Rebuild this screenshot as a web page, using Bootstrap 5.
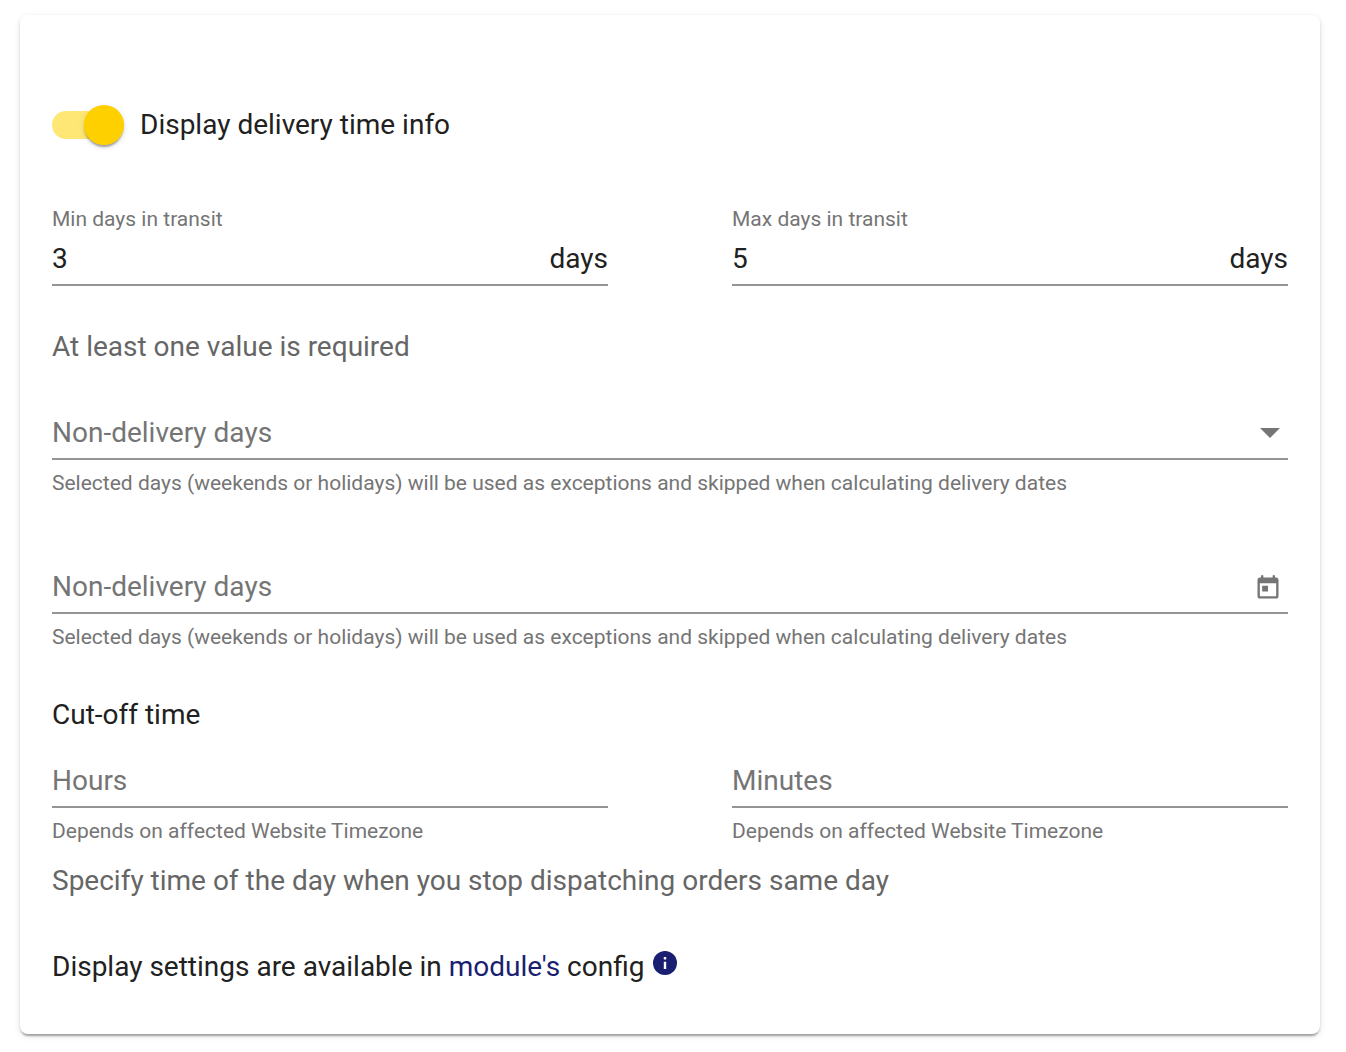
<!DOCTYPE html>
<html lang="en">
<head>
<meta charset="utf-8">
<meta name="viewport" content="width=device-width, initial-scale=1">
<title>Delivery time settings</title>
<link href="https://cdn.jsdelivr.net/npm/bootstrap@5.3.0/dist/css/bootstrap.min.css" rel="stylesheet">
<style>
  body { font-family: Roboto, "Liberation Sans", sans-serif; font-size: 28px; line-height: 40px; color: #212121; background: #fff; }
  .page-wrap { padding: 15px 26px 18px 20px; }
  .settings-card { padding: 89px 32px 47px; border-radius: 8px;
    box-shadow: 0 4px 2px -2px rgba(0,0,0,.2), 0 2px 2px 0 rgba(0,0,0,.14), 0 2px 6px 0 rgba(0,0,0,.12); }
  .toggle-row { gap: 16px; margin-bottom: 62px; }
  .toggle-row label { padding-top: 1px; }
  .toggle { appearance: none; width: 72px; height: 40px; margin: 0; display: flex; align-items: center; cursor: pointer; flex: none; position: relative; }
  .toggle::before { content: ""; width: 72px; height: 28px; border-radius: 14px; background: #e0e0e0; }
  .toggle::after { content: ""; position: absolute; left: 0; top: 0; width: 40px; height: 40px; border-radius: 50%; background: #fafafa;
    box-shadow: 0 4px 2px -2px rgba(0,0,0,.2), 0 2px 2px 0 rgba(0,0,0,.14), 0 2px 6px 0 rgba(0,0,0,.12); }
  .toggle:checked::before { background: #ffe775; }
  .toggle:checked::after { left: auto; right: 0; background: #ffd000; }
  .pair { column-gap: 124px; }
  .pair > * { flex: 1 1 0; min-width: 0; }
  .caption { display: block; font-size: 21px; line-height: 24px; color: #757575; }
  .line { height: 55px; border-bottom: 2px solid #949494; }
  .line + .caption { margin-top: 11px; }
  .line input, .line select { flex: 1 1 0; min-width: 0; height: 53px; padding: 2px 0 0; border: 0; border-radius: 0; background-color: transparent; color: inherit; outline: 0; }
  .line span { padding-top: 2px; }
  .line input::placeholder { color: #757575; opacity: 1; }
  .line select { appearance: none; color: #757575;
    background: url("data:image/svg+xml,%3Csvg xmlns='http://www.w3.org/2000/svg' viewBox='0 0 20 10'%3E%3Cpath fill='%23757575' d='M0 0h20L10 10z'/%3E%3C/svg%3E") no-repeat right 8px top 23px / 20px 10px; }
  .icon-btn { padding: 4px 6px 0; border: 0; background: none; color: #757575; }
  .muted { color: #666; }
  .space-sm { margin-bottom: 18px; }
  .space-md { margin-bottom: 41px; }
  .note { margin-bottom: 38px; }
  .space-lg { margin-bottom: 46px; }
  .space-xl { margin-bottom: 64px; }
  .config-link, .info-mark { color: #1a1f71; text-decoration: none; }
  .info-mark { margin-left: 7px; padding-bottom: 9px; }
</style>
</head>
<body>
<main class="page-wrap">
  <form class="settings-card bg-white">
    <div class="toggle-row d-flex align-items-center">
      <input class="toggle" type="checkbox" role="switch" id="showInfo" checked>
      <label for="showInfo">Display delivery time info</label>
    </div>

    <div class="pair d-flex space-md">
      <div>
        <label class="caption" for="minDays">Min days in transit</label>
        <div class="line d-flex align-items-center">
          <input type="text" inputmode="numeric" id="minDays" value="3"><span>days</span>
        </div>
      </div>
      <div>
        <label class="caption" for="maxDays">Max days in transit</label>
        <div class="line d-flex align-items-center">
          <input type="text" inputmode="numeric" id="maxDays" value="5"><span>days</span>
        </div>
      </div>
    </div>

    <p class="muted note">At least one value is required</p>

    <div class="space-xl">
      <div class="line d-flex align-items-center">
        <select id="weekDays" aria-label="Non-delivery days" aria-describedby="weekHint"><option>Non-delivery days</option></select>
      </div>
      <span class="caption" id="weekHint">Selected days (weekends or holidays) will be used as exceptions and skipped when calculating delivery dates</span>
    </div>

    <div class="space-lg">
      <div class="line d-flex align-items-center">
        <input type="text" id="dates" placeholder="Non-delivery days" aria-label="Non-delivery days" aria-describedby="dateHint">
        <button class="icon-btn d-flex" type="button" aria-label="Open calendar">
          <svg width="28" height="28" viewBox="0 0 24 24" fill="currentColor" aria-hidden="true"><path d="M19 3h-1V1h-2v2H8V1H6v2H5c-1.110 0-1.990.9-1.990 2L3 19c0 1.100.890 2 2 2h14c1.100 0 2-.9 2-2V5c0-1.100-.9-2-2-2zm0 16H5V8h14v11zM7 10h5v5H7v-5z"/></svg>
        </button>
      </div>
      <span class="caption" id="dateHint">Selected days (weekends or holidays) will be used as exceptions and skipped when calculating delivery dates</span>
    </div>

    <p class="space-sm">Cut-off time</p>

    <div class="pair d-flex space-sm">
      <div>
        <div class="line d-flex align-items-center"><input type="text" inputmode="numeric" id="hours" placeholder="Hours" aria-label="Hours" aria-describedby="hoursHint"></div>
        <span class="caption" id="hoursHint">Depends on affected Website Timezone</span>
      </div>
      <div>
        <div class="line d-flex align-items-center"><input type="text" inputmode="numeric" id="minutes" placeholder="Minutes" aria-label="Minutes" aria-describedby="minutesHint"></div>
        <span class="caption" id="minutesHint">Depends on affected Website Timezone</span>
      </div>
    </div>

    <p class="muted space-lg">Specify time of the day when you stop dispatching orders same day</p>

    <div class="d-flex align-items-center">
      <p class="mb-0">Display settings are available in <a class="config-link" href="#">module's</a> config</p>
      <span class="info-mark d-flex" role="img" aria-label="Information">
        <svg width="28" height="28" viewBox="0 0 28 28" aria-hidden="true"><circle cx="14" cy="14" r="12" fill="currentColor"/><path fill="#fff" d="M12.800 8h2.400v2.400h-2.400zM12.800 12.800h2.400V20h-2.400z"/></svg>
      </span>
    </div>
  </form>
</main>
<script src="https://cdn.jsdelivr.net/npm/bootstrap@5.3.0/dist/js/bootstrap.bundle.min.js"></script>
</body>
</html>
